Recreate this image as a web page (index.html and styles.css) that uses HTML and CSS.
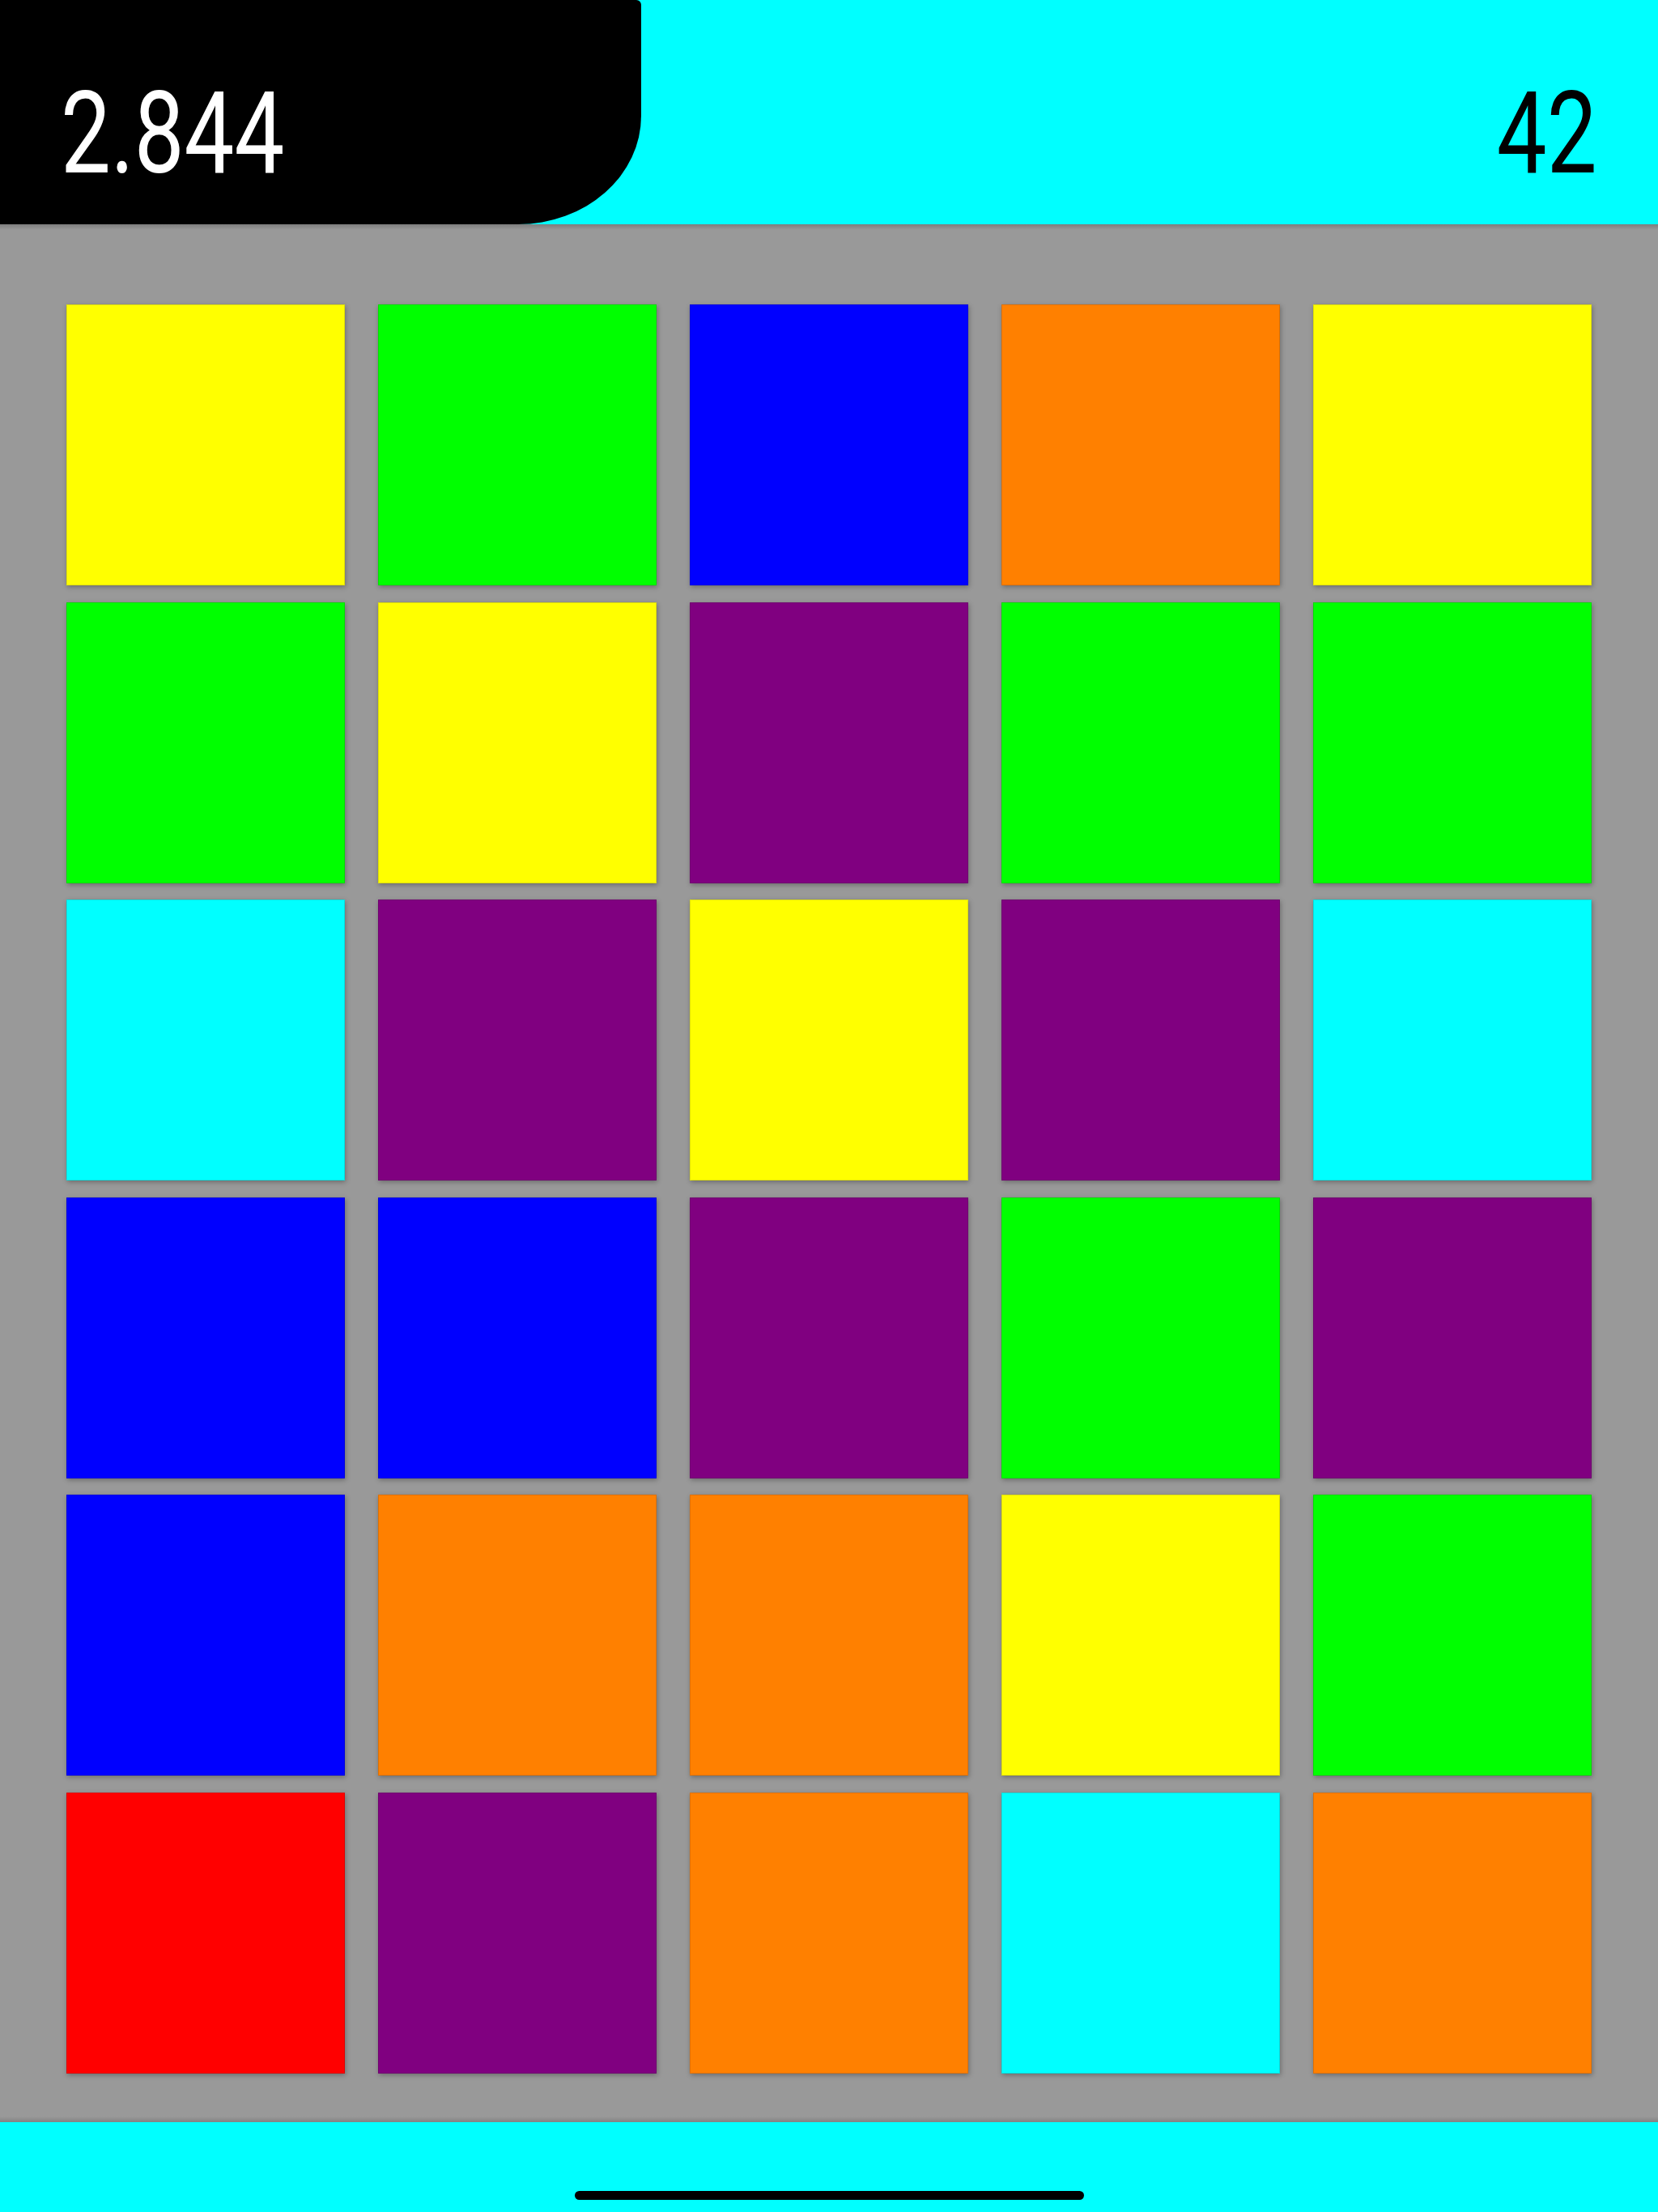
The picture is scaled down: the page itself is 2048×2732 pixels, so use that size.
FILE: index.html
```html
<!DOCTYPE html>
<html lang="en">
<head>
<meta charset="utf-8">
<title>Color Grid</title>
<link rel="stylesheet" href="styles.css">
</head>
<body>
<div class="screen">
  <header class="topbar">
    <div class="timer"><span class="num num-left">2.844</span></div>
    <div class="score"><span class="num num-right">42</span></div>
  </header>
  <main class="board">
    <div class="grid">
      <div class="tile yellow"></div>
      <div class="tile green"></div>
      <div class="tile blue"></div>
      <div class="tile orange"></div>
      <div class="tile yellow"></div>

      <div class="tile green"></div>
      <div class="tile yellow"></div>
      <div class="tile purple"></div>
      <div class="tile green"></div>
      <div class="tile green"></div>

      <div class="tile cyan"></div>
      <div class="tile purple"></div>
      <div class="tile yellow"></div>
      <div class="tile purple"></div>
      <div class="tile cyan"></div>

      <div class="tile blue"></div>
      <div class="tile blue"></div>
      <div class="tile purple"></div>
      <div class="tile green"></div>
      <div class="tile purple"></div>

      <div class="tile blue"></div>
      <div class="tile orange"></div>
      <div class="tile orange"></div>
      <div class="tile yellow"></div>
      <div class="tile green"></div>

      <div class="tile red"></div>
      <div class="tile purple"></div>
      <div class="tile orange"></div>
      <div class="tile cyan"></div>
      <div class="tile orange"></div>
    </div>
  </main>
  <footer class="bottombar">
    <div class="home-indicator"></div>
  </footer>
</div>
</body>
</html>
```
FILE: styles.css
```css
html, body {
  margin: 0;
  padding: 0;
}

body {
  width: 2048px;
  height: 2732px;
  overflow: hidden;
  font-family: Roboto, "DejaVu Sans", sans-serif;
}

.screen {
  display: flex;
  flex-direction: column;
  height: 2732px;
}

.topbar {
  height: 277px;
  flex: 0 0 277px;
  background: #00ffff;
  display: flex;
  justify-content: space-between;
  align-items: flex-start;
}

.timer {
  width: 792px;
  height: 277px;
  background: #000;
  border-top-right-radius: 6px;
  border-bottom-right-radius: 152px 134px;
  box-sizing: border-box;
  padding: 94px 0 0 75px;
}

.score {
  box-sizing: border-box;
  padding: 94px 76px 0 0;
}

.num {
  display: block;
  font-size: 141px;
  line-height: 141px;
  font-weight: 400;
  white-space: nowrap;
}

.num-left {
  color: #fff;
  transform: scaleX(0.78);
  transform-origin: left center;
}

.num-right {
  color: #000;
  transform: scaleX(0.78);
  transform-origin: right center;
}

.board {
  flex: 0 0 auto;
  background:
    linear-gradient(to bottom, rgba(0, 0, 0, 0.18), rgba(0, 0, 0, 0) 7px),
    linear-gradient(to top, rgba(0, 0, 0, 0.15), rgba(0, 0, 0, 0) 7px),
    #999999;
  padding: 99px 82px 60px;
}

.grid {
  display: grid;
  grid-template-columns: repeat(5, 344px);
  grid-auto-rows: 347px;
  column-gap: 41px;
  row-gap: 20.5px;
}

.tile {
  box-sizing: border-box;
  border: 1px solid rgba(0, 0, 0, 0.12);
  box-shadow: 1px 2px 6px rgba(0, 0, 0, 0.3);
}

.yellow { background: #ffff00; }
.green  { background: #00ff00; }
.blue   { background: #0000ff; }
.orange { background: #ff8000; }
.purple { background: #800080; }
.cyan   { background: #00ffff; }
.red    { background: #ff0000; }

.bottombar {
  flex: 1 1 auto;
  background: #00ffff;
  display: flex;
  justify-content: center;
  align-items: flex-end;
  padding-bottom: 15px;
  box-sizing: border-box;
}

.home-indicator {
  width: 629px;
  height: 11px;
  border-radius: 6px;
  background: #000;
}
```
